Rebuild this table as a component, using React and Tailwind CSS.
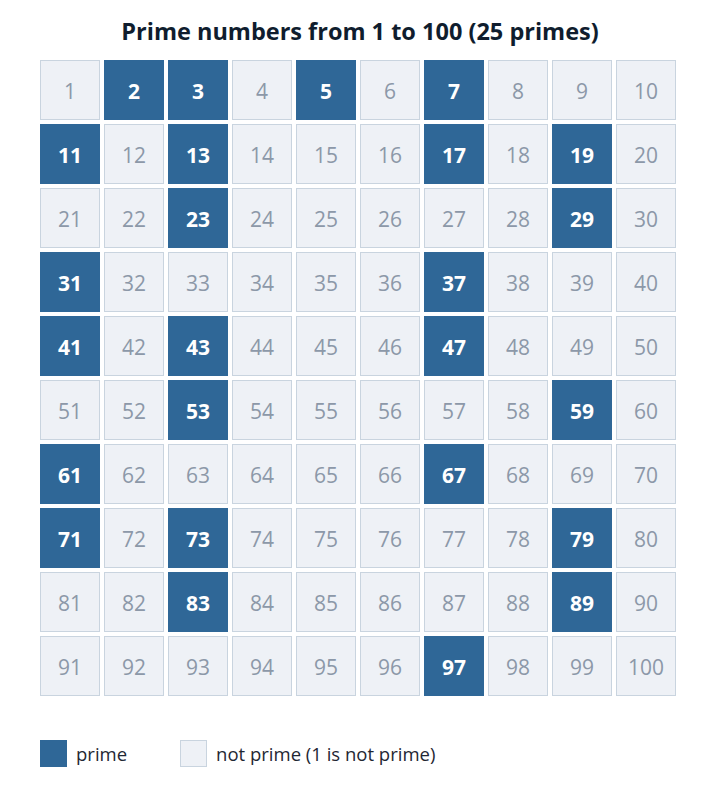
import React from "react";

const isPrime = (n) => {
  if (n < 2) return false;
  for (let i = 2; i * i <= n; i++) if (n % i === 0) return false;
  return true;
};

const nums = Array.from({ length: 100 }, (_, i) => i + 1);

export default function App() {
  return (
    <div
      className="w-[720px] h-[790px] bg-white pt-[15px]"
      style={{ fontFamily: '"Open Sans", "Noto Sans", sans-serif' }}
    >
      <h1 className="text-center text-[23.5px] leading-[32px] font-bold text-[#0f1d2e]">
        Prime numbers from 1 to 100 (25 primes)
      </h1>

      <div className="mt-[13px] ml-[40px] grid grid-cols-[repeat(10,60px)] gap-[4px]">
        {nums.map((n) => {
          const p = isPrime(n);
          return (
            <div
              key={n}
              className={`h-[60px] pt-[3px] flex items-center justify-center text-[21px] ${
                p
                  ? "bg-[#2f6797] border border-[#2f6797] text-white font-bold"
                  : "bg-[#eef1f6] border border-[#c9d4df] text-[#8c98a8]"
              }`}
            >
              {n}
            </div>
          );
        })}
      </div>

      <div className="mt-[44px] ml-[40px] flex items-center text-[18.5px] text-[#1f2733]">
        <div className="w-[27px] h-[27px] bg-[#2f6797]" />
        <span className="ml-[9px]">prime</span>
        <div className="ml-[53px] w-[27px] h-[27px] bg-[#eef1f6] border border-[#c9d4df]" />
        <span className="ml-[9px]">not prime (1 is not prime)</span>
      </div>
    </div>
  );
}
